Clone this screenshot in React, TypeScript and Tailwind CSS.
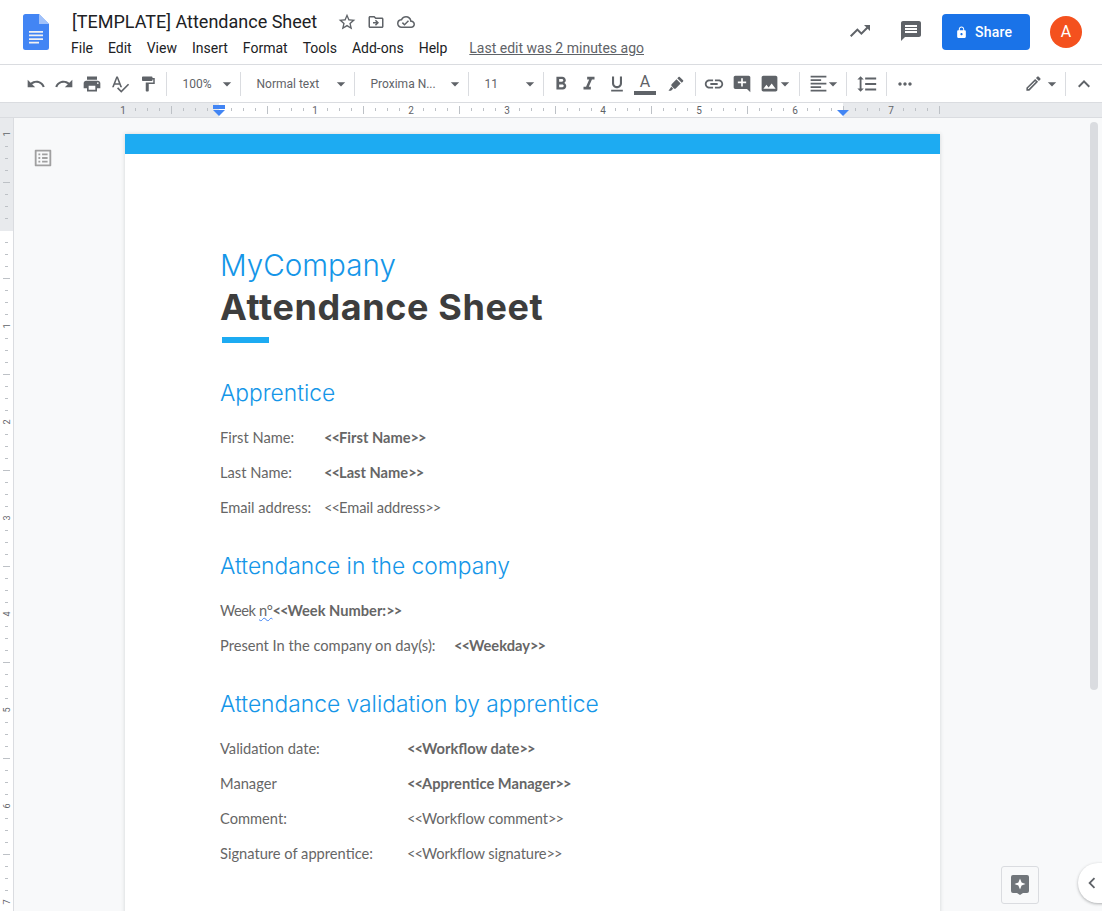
import type { ReactNode } from "react";
import {
  MdAddComment,
  MdArrowDropDown,
  MdChevronLeft,
  MdExpandLess,
  MdFormatAlignLeft,
  MdFormatBold,
  MdFormatItalic,
  MdFormatLineSpacing,
  MdFormatPaint,
  MdFormatUnderlined,
  MdImage,
  MdLink,
  MdLock,
  MdMessage,
  MdMoreHoriz,
  MdOutlineCloudDone,
  MdOutlineDriveFileMove,
  MdOutlineEdit,
  MdOutlineListAlt,
  MdPrint,
  MdRedo,
  MdSpellcheck,
  MdStarBorder,
  MdTrendingUp,
  MdUndo,
} from "react-icons/md";

const MENU = ["File", "Edit", "View", "Insert", "Format", "Tools", "Add-ons", "Help"];

function range(n: number) {
  return Array.from({ length: n }, (_, i) => i);
}

function DocsLogo() {
  return (
    <svg width="26" height="36" viewBox="0 0 26 36">
      <path d="M16 0H2.5A2.5 2.5 0 0 0 0 2.5v31A2.5 2.5 0 0 0 2.5 36h21a2.5 2.5 0 0 0 2.5-2.5V10z" fill="#4285f4" />
      <path d="M16 0v10h10z" fill="#a1c2fa" />
      <path d="M6 17h14v1.7H6zM6 20.6h14v1.7H6zM6 24.2h14v1.7H6zM6 27.8h10v1.7H6z" fill="#f1f1f1" />
    </svg>
  );
}

function Highlighter() {
  return (
    <svg width="20" height="20" viewBox="0 0 24 24" fill="currentColor">
      <path d="M16.5 3.5l4 4c.4.4.4 1 0 1.4l-1.6 1.6-5.4-5.4 1.6-1.6c.4-.4 1-.4 1.4 0z" />
      <path d="M12.6 6.4l5 5-5.6 5.6c-.8.8-2 .8-2.8 0l-2.2-2.2c-.8-.8-.8-2 0-2.8z" />
      <path d="M6.4 15.4l2.2 2.2L6 20H3z" />
    </svg>
  );
}

function Sep() {
  return <div className="w-px h-[24px] bg-[#dadce0] shrink-0" />;
}

function Btn({ children, w = "w-[28px]" }: { children: ReactNode; w?: string }) {
  return <div className={`${w} h-[28px] flex items-center justify-center shrink-0 text-[#5f6368]`}>{children}</div>;
}

function Caret() {
  return <MdArrowDropDown size={20} className="text-[#5f6368] shrink-0" />;
}

function Select({ label, w }: { label: string; w: string }) {
  return (
    <div className={`${w} flex items-center justify-between pl-[15.5px] pr-[3px] text-[12px] text-[#5f6368] shrink-0`}>
      <span>{label}</span>
      <Caret />
    </div>
  );
}

function Header() {
  return (
    <header className="h-[65px] flex border-b border-[#dadce0] bg-white">
      <div className="w-[71px] pl-[23px] pt-[14px] shrink-0">
        <DocsLogo />
      </div>
      <div className="pt-[10px]">
        <div className="flex items-center h-[24px]">
          <span className="text-[18px] leading-[24px] text-[#202124] ml-px">[TEMPLATE] Attendance Sheet</span>
          <div className="flex items-center text-[#5f6368] ml-[20px]">
            <MdStarBorder size={20} />
            <MdOutlineDriveFileMove size={18} className="ml-[10px]" />
            <MdOutlineCloudDone size={18} className="ml-[12px]" />
          </div>
        </div>
        <div className="flex items-center mt-[2px] h-[24px] text-[14px] text-[#202124] gap-[15px]">
          {MENU.map((m) => (
            <span key={m}>{m}</span>
          ))}
          <span className="ml-[7px] text-[#5f6368] underline">Last edit was 2 minutes ago</span>
        </div>
      </div>
      <div className="ml-auto flex items-center pr-[20px] text-[#5f6368]">
        <MdTrendingUp size={24} className="mb-[2px]" />
        <MdMessage size={24} className="ml-[27px] mb-[2px]" />
        <div className="ml-[19px] w-[88px] h-[36px] rounded-[4px] bg-[#1a73e8] text-white flex items-center pl-[13px] gap-[7px] text-[14px] font-medium tracking-[0.2px]">
          <MdLock size={13} />
          <span>Share</span>
        </div>
        <div className="ml-[20px] w-[32px] h-[32px] rounded-full bg-[#f4511e] text-white flex items-center justify-center text-[16px]">
          A
        </div>
      </div>
    </header>
  );
}

function Toolbar() {
  return (
    <div className="h-[38px] flex items-center pl-[22px] pr-[4px] border-b border-[#dadce0] bg-white">
      <Btn><MdUndo size={20} /></Btn>
      <Btn><MdRedo size={20} /></Btn>
      <Btn><MdPrint size={20} /></Btn>
      <Btn><MdSpellcheck size={20} /></Btn>
      <Btn><MdFormatPaint size={18} /></Btn>
      <div className="w-[4px]" />
      <Sep />
      <Select label="100%" w="w-[73px]" />
      <Sep />
      <Select label="Normal text" w="w-[113px]" />
      <Sep />
      <Select label="Proxima N..." w="w-[113px]" />
      <Sep />
      <Select label="11" w="w-[74px]" />
      <Sep />
      <div className="w-[3px]" />
      <Btn><MdFormatBold size={22} /></Btn>
      <Btn><MdFormatItalic size={22} /></Btn>
      <Btn><MdFormatUnderlined size={20} /></Btn>
      <Btn>
        <div className="flex flex-col items-center w-[22px]">
          <span className="text-[16px] leading-[18px] text-[#5f6368]">A</span>
          <div className="w-[22px] h-[4px] bg-[#5f6368]" />
        </div>
      </Btn>
      <div className="w-[3px]" />
      <Btn><Highlighter /></Btn>
      <div className="w-[5px]" />
      <Sep />
      <div className="w-[4px]" />
      <Btn><MdLink size={22} /></Btn>
      <Btn><MdAddComment size={20} /></Btn>
      <Btn w="w-[26px]"><MdImage size={21} /></Btn>
      <div className="-ml-[3px]"><Btn w="w-[12px]"><Caret /></Btn></div>
      <div className="w-[8px]" />
      <Sep />
      <div className="w-[5px]" />
      <Btn w="w-[26px]"><MdFormatAlignLeft size={21} /></Btn>
      <div className="-ml-[4px]"><Btn w="w-[12px]"><Caret /></Btn></div>
      <div className="w-[7px]" />
      <Sep />
      <div className="w-[6px]" />
      <Btn><MdFormatLineSpacing size={22} /></Btn>
      <div className="w-[5px]" />
      <Sep />
      <div className="w-[4px]" />
      <Btn><MdMoreHoriz size={20} /></Btn>
      <div className="ml-auto flex items-center">
        <Btn><MdOutlineEdit size={19} /></Btn>
        <div className="-ml-[1px]"><Btn w="w-[12px]"><Caret /></Btn></div>
        <div className="w-[7px]" />
        <Sep />
        <div className="w-[4px]" />
        <Btn><MdExpandLess size={24} /></Btn>
      </div>
    </div>
  );
}

function HorizontalRuler() {
  const labels: [string, number][] = [
    ["1", 123], ["1", 315], ["2", 411], ["3", 507], ["4", 603], ["5", 699], ["6", 795], ["7", 891],
  ];
  return (
    <div className="h-[15px] border-b border-[#dadce0] bg-[#e8eaed]">
      <svg width="1102" height="14" className="block">
        <rect x="219" y="0" width="624" height="14" fill="#fff" />
        {range(68).map((i) => {
          const x = 135 + i * 12;
          if ((x - 123) % 96 === 0) return null;
          const long = (x - 123) % 48 === 0;
          return <rect key={i} x={x} y={long ? 3 : 5} width="1" height={long ? 8 : 3} fill="#bdc1c6" />;
        })}
        {labels.map(([t, x], i) => (
          <text key={i} x={x} y="10.5" textAnchor="middle" fontSize="10" fontFamily="Roboto, sans-serif" fill="#5f6368">{t}</text>
        ))}
        <rect x="213" y="2" width="12" height="4" fill="#4285f4" />
        <path d="M213 7h12l-6 6z" fill="#4285f4" />
        <path d="M837 7h12l-6 6z" fill="#4285f4" />
      </svg>
    </div>
  );
}

function VerticalRuler() {
  const labels: [string, number][] = [
    ["1", 134], ["1", 326], ["2", 422], ["3", 518], ["4", 614], ["5", 710], ["6", 806], ["7", 902],
  ];
  return (
    <div className="w-[14px] shrink-0 border-r border-[#dadce0] bg-white">
      <svg width="13" height="793" className="block">
        <rect x="0" y="0" width="13" height="113" fill="#e8eaed" />
        {range(66).map((i) => {
          const y = 28 + i * 12;
          if ((y - 16) % 96 === 0) return null;
          const long = (y - 16) % 48 === 0;
          return <rect key={i} x={long ? 3 : 5} y={y} width={long ? 7 : 3} height="1" fill="#bdc1c6" />;
        })}
        {labels.map(([t, y], i) => (
          <text key={i} x="0" y="0" transform={`translate(9.5 ${y - 118}) rotate(-90)`} textAnchor="middle" fontSize="9" fontFamily="Roboto, sans-serif" fill="#5f6368">{t}</text>
        ))}
      </svg>
    </div>
  );
}

function Heading({ children, className }: { children: ReactNode; className: string }) {
  return <h2 className={`font-['Inter',sans-serif] font-light text-[22.8px] leading-[30px] text-[#1596e8] ${className}`}>{children}</h2>;
}

function Row({ label, w, children }: { label: string; w: string; children: ReactNode }) {
  return (
    <div className="flex h-[35px] items-center">
      <span className={`${w} shrink-0`}>{label}</span>
      <span>{children}</span>
    </div>
  );
}

// the << >> in the doc font are narrower than Lato's
function Merge({ name, bold }: { name: string; bold?: boolean }) {
  return (
    <span className={bold ? "font-bold" : "tracking-[-0.1px]"}>
      <span className="tracking-[-1px]">&lt;&lt;</span>
      {name}
      <span className="tracking-[-1px]">&gt;&gt;</span>
    </span>
  );
}

function Page() {
  return (
    <div className="ml-[111px] mt-[16px] w-[815px] h-[900px] bg-white shadow-[0_0_4px_rgba(60,64,67,0.2)] shrink-0">
      <div className="h-[20px] bg-[#1dabf2]" />
      <div className="pl-[95px] text-[14.67px] text-[#666666] font-['Lato',sans-serif]">
        <div className="pt-[90px] font-['Inter',sans-serif] font-light text-[29.6px] leading-[42px] text-[#1596e8]">MyCompany</div>
        <div className="font-['Inter',sans-serif] text-[36px] leading-[43px] font-bold tracking-[0.6px] text-[#3d3d3d]">Attendance Sheet</div>
        <div className="ml-[2px] mt-[8px] w-[47px] h-[6px] bg-[#1dabf2]" />
        <Heading className="mt-[35px]">Apprentice</Heading>
        <div className="mt-[12px]">
          <Row label="First Name:" w="w-[104px]"><Merge name="First Name" bold /></Row>
          <Row label="Last Name:" w="w-[104px]"><Merge name="Last Name" bold /></Row>
          <Row label="Email address:" w="w-[104px]"><Merge name="Email address" /></Row>
        </div>
        <Heading className="mt-[26px]">Attendance in the company</Heading>
        <div className="mt-[12px] flex h-[35px] items-center">
          <span>
            <span className="tracking-[-0.4px]">Week <span className="underline decoration-wavy decoration-[#4285f4] decoration-1">n°</span></span>
            <Merge name="Week Number:" bold />
          </span>
        </div>
        <Row label="Present In the company on day(s):" w="w-[234px]"><Merge name="Weekday" bold /></Row>
        <Heading className="mt-[26px]">Attendance validation by apprentice</Heading>
        <div className="mt-[12px]">
          <Row label="Validation date:" w="w-[187px]"><Merge name="Workflow date" bold /></Row>
          <Row label="Manager" w="w-[187px]"><Merge name="Apprentice Manager" bold /></Row>
          <Row label="Comment:" w="w-[187px]"><Merge name="Workflow comment" /></Row>
          <Row label="Signature of apprentice:" w="w-[187px]"><Merge name="Workflow signature" /></Row>
        </div>
      </div>
    </div>
  );
}

export default function App() {
  return (
    <div className="h-[911px] w-[1102px] overflow-hidden flex flex-col font-['Roboto',sans-serif] bg-[#f8f9fa]">
      <Header />
      <Toolbar />
      <HorizontalRuler />
      <main className="relative flex flex-1 min-h-0 overflow-hidden">
        <VerticalRuler />
        <Page />
        <MdOutlineListAlt size={22} className="absolute left-[32px] top-[29px] text-[#a0a0a0]" />
        <div className="absolute left-[1090px] top-[4px] w-[8px] h-[568px] rounded-full bg-[#dadce0]" />
        <div className="absolute left-[1001px] top-[748px] w-[38px] h-[38px] rounded-[3px] border border-[#dadce0] bg-[#f8f9fa] flex items-center justify-center">
          <svg width="18" height="20" viewBox="0 0 18 20">
            <path d="M2 0h14a2 2 0 0 1 2 2v14a2 2 0 0 1-2 2h-4l-3 2-3-2H2a2 2 0 0 1-2-2V2a2 2 0 0 1 2-2z" fill="#70757a" />
            <path d="M9 3.5l1.6 3.9L14.5 9l-3.9 1.6L9 14.5l-1.6-3.9L3.5 9l3.9-1.6z" fill="#fff" />
          </svg>
        </div>
        <div className="absolute left-[1078px] top-[745px] w-[48px] h-[40px] rounded-l-full bg-white shadow-[0_1px_3px_rgba(60,64,67,0.4)] flex items-center pl-[3px]">
          <MdChevronLeft size={22} className="text-[#5f6368]" />
        </div>
      </main>
    </div>
  );
}
